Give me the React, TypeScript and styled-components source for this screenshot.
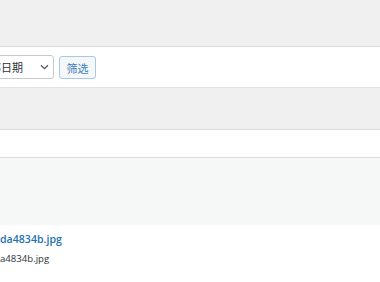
import React from "react";
import styled, { createGlobalStyle } from "styled-components";

const Global = createGlobalStyle`
  html, body { margin: 0; padding: 0; background: #ffffff; overflow: hidden; }
  body { font-family: "Open Sans", "Noto Sans CJK SC", sans-serif; }
`;

const Page = styled.div`
  width: 380px;
  height: 282px;
  display: flex;
  flex-direction: column;
  overflow: hidden;
  background: #ffffff;
`;

const Band = styled.div<{ $h: number; $bg: string; $bottom?: boolean }>`
  flex: none;
  height: ${(p) => p.$h}px;
  background: ${(p) => p.$bg};
  border-bottom: ${(p) => (p.$bottom ? "1px solid #dcdcde" : "none")};
`;

const Toolbar = styled.div`
  flex: none;
  height: 41px;
  display: flex;
  align-items: flex-start;
  padding-top: 8px;
  box-sizing: border-box;
  background: #ffffff;
  border-bottom: 1px solid #e2e2e2;
  gap: 5px;
`;

const SelectBox = styled.div`
  margin-left: -28px;
  width: 82px;
  height: 24px;
  box-sizing: border-box;
  border: 1px solid #c8c9cc;
  border-radius: 3px;
  background: #ffffff;
  display: flex;
  align-items: center;
  justify-content: space-between;
  padding: 0 4px 0 6px;
  font-family: "Noto Sans CJK SC", sans-serif;
  font-size: 11px;
  color: #2c3338;
`;

const FilterButton = styled.div`
  margin-top: 1px;
  width: 37px;
  height: 23px;
  box-sizing: border-box;
  border: 1px solid #a7c8e8;
  border-radius: 3px;
  background: #f6f7f7;
  display: flex;
  align-items: center;
  justify-content: center;
  font-family: "Noto Sans CJK SC", sans-serif;
  font-size: 11px;
  color: #3a7fc0;
`;

const Files = styled.div`
  display: flex;
  flex-direction: column;
  padding-top: 7px;
  gap: 4px;
`;

const FileLink = styled.a`
  font-family: "Open Sans", sans-serif;
  font-size: 10.6px;
  font-weight: 600;
  color: #2271b1;
  text-decoration: none;
  line-height: 15px;
`;

const FileName = styled.div`
  font-family: "Open Sans", sans-serif;
  font-size: 9.6px;
  color: #2c3338;
  line-height: 15px;
`;

const Chevron = () => (
  <svg width="9" height="6" viewBox="0 0 9 6" fill="none">
    <path d="M1 1.2l3.5 3.5L8 1.2" stroke="#50575e" strokeWidth="1.3" />
  </svg>
);

export default function App() {
  return (
    <Page>
      <Global />
      <Band $h={46} $bg="#f0f0f0" $bottom />
      <Toolbar>
        <SelectBox>
          <span>全部日期</span>
          <Chevron />
        </SelectBox>
        <FilterButton>筛选</FilterButton>
      </Toolbar>
      <Band $h={41} $bg="#f0f0f0" $bottom />
      <Band $h={27} $bg="#ffffff" $bottom />
      <Band $h={67} $bg="#f6f7f7" />
      <Files>
        <FileLink href="#">da4834b.jpg</FileLink>
        <FileName>a4834b.jpg</FileName>
      </Files>
    </Page>
  );
}
